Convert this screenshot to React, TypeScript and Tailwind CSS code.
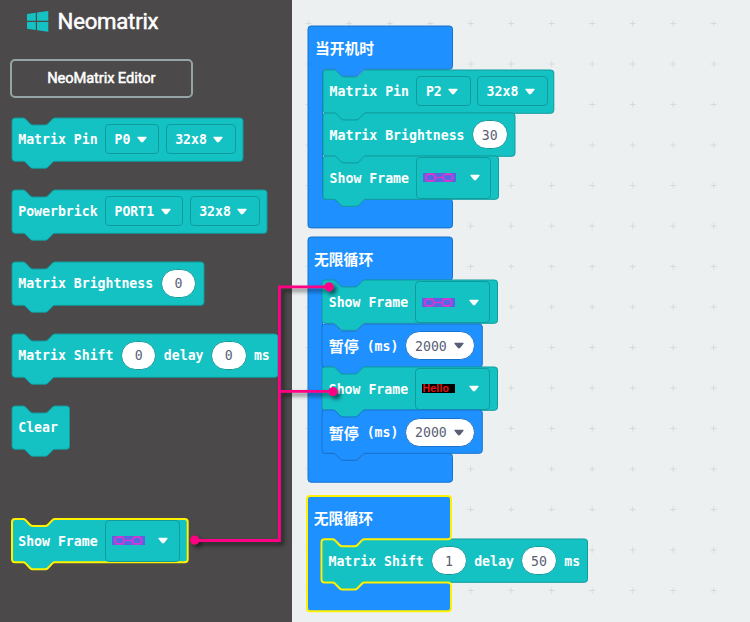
import React from "react";

const TEAL = "#14c2c4";
const TEAL_EDGE = "#109b9d";
const BLUE = "#1e90ff";
const BLUE_EDGE = "#1873cc";

const round = (n: number) => Math.round(n * 100) / 100;

// Outline of a statement block with the notch on top and the tab underneath.
function blockPath(w: number, h: number) {
  const r = 3;
  return `M0 ${r} Q0 0 ${r} 0 H11 Q12.5 0 13.6 1.1 L18 5.7 Q19.2 7 21 7 H33 Q34.8 7 36 5.7 L40.4 1.1 Q41.5 0 43 0 H${round(w - r)} Q${w} 0 ${w} ${r} V${round(h - r)} Q${w} ${h} ${round(w - r)} ${h} H43 Q41.5 ${h} 40.4 ${h + 1.1} L36 ${h + 5.7} Q34.8 ${h + 7} 33 ${h + 7} H21 Q19.2 ${h + 7} 18 ${h + 5.7} L13.6 ${h + 1.1} Q12.5 ${h} 11 ${h} H${r} Q0 ${h} 0 ${h - r} Z`;
}

// Outline of an event block that wraps a stack of statements.
function hatPath(w: number, inner: number) {
  const r = 3;
  const a = 43.3;
  const b = a + inner;
  const e = b + 28.7;
  const i = 14.5;
  return `M0 ${r} Q0 0 ${r} 0 H${w - r} Q${w} 0 ${w} ${r} V${a - r} Q${w} ${a} ${w - r} ${a} H${i + 43} Q${i + 41.5} ${a} ${i + 40.4} ${a + 1.1} L${i + 36} ${a + 5.7} Q${i + 34.8} ${a + 7} ${i + 33} ${a + 7} H${i + 21} Q${i + 19.2} ${a + 7} ${i + 18} ${a + 5.7} L${i + 13.6} ${a + 1.1} Q${i + 12.5} ${a} ${i + 11} ${a} H${i + 3} Q${i} ${a} ${i} ${a + 3} V${b - 3} Q${i} ${b} ${i + 3} ${b} H${i + 11} Q${i + 12.5} ${b} ${i + 13.6} ${b + 1.1} L${i + 18} ${b + 5.7} Q${i + 19.2} ${b + 7} ${i + 21} ${b + 7} H${i + 33} Q${i + 34.8} ${b + 7} ${i + 36} ${b + 5.7} L${i + 40.4} ${b + 1.1} Q${i + 41.5} ${b} ${i + 43} ${b} H${w - r} Q${w} ${b} ${w} ${b + r} V${e - r} Q${w} ${e} ${w - r} ${e} H${r} Q0 ${e} 0 ${e - r} Z`;
}

function Caret({ dark = false }: { dark?: boolean }) {
  return (
    <svg className="h-[7px] w-[10px] shrink-0 overflow-visible" viewBox="0 0 10 7">
      <path d="M1 1.3 H9 L5.8 5.3 Q5 6.1 4.2 5.3 Z" fill={dark ? "#575e75" : "#fff"} stroke={dark ? "#575e75" : "#fff"} strokeWidth="1.3" strokeLinejoin="round" />
    </svg>
  );
}

function Block({ width, blue, selected, children }: { width: number; blue?: boolean; selected?: boolean; children: React.ReactNode }) {
  return (
    <div className="relative h-[43.3px] shrink-0" style={{ width }}>
      <svg className="absolute left-0 top-0 h-full w-full overflow-visible">
        <path
          d={blockPath(width, 43.3)}
          fill={blue ? BLUE : TEAL}
          stroke={selected ? "#fff200" : blue ? BLUE_EDGE : TEAL_EDGE}
          strokeWidth={selected ? 2 : 1}
        />
      </svg>
      <div className="relative flex h-[43.3px] items-center gap-[7.4px] whitespace-pre pl-[6.7px]">{children}</div>
    </div>
  );
}

function Label({ text }: { text: string }) {
  return <span className="pt-[1.4px]">{text}</span>;
}

function Drop({ text, width }: { text: string; width: number }) {
  return (
    <div className="-mr-[1px] flex h-[30px] shrink-0 items-center gap-[6.5px] rounded-[4px] border border-[#109b9d] pl-[8.5px]" style={{ width }}>
      <Label text={text} />
      <Caret />
    </div>
  );
}

function Num({ text }: { text: string }) {
  return (
    <div className="flex h-[29px] w-[35.6px] shrink-0 items-center justify-center rounded-full border border-[#109b9d] bg-white font-normal text-[#575e75]">
      <Label text={text} />
    </div>
  );
}

function Frame({ hello }: { hello?: boolean }) {
  return (
    <div className="flex h-[42px] w-[75px] shrink-0 items-center gap-[13.5px] rounded-[4px] border border-[#109b9d] pl-[6px]">
      {hello ? (
        <div className="flex h-[9px] w-[33px] shrink-0 items-center bg-black font-['Liberation_Sans'] text-[10.5px] font-bold leading-[9px] tracking-[0.2px] text-[#f01010]">
          Hello
        </div>
      ) : (
        <svg className="h-[9px] w-[33px] shrink-0" viewBox="0 0 33 9">
          <rect width="33" height="9" fill="#5068e8" />
          <path d="M0 .5H33M0 8.5H33" stroke="#7058dc" strokeWidth="1" />
          <g fill="none" stroke="#df38c8" strokeWidth="1.7">
            <rect x="2.8" y="1.1" width="9.4" height="6.8" rx="3.4" />
            <rect x="20.3" y="1.1" width="9.4" height="6.8" rx="3.4" />
            <path d="M12 4.5H20.5" strokeWidth="1.3" />
          </g>
        </svg>
      )}
      <Caret />
    </div>
  );
}

function ShowFrame({ width, hello, selected }: { width: number; hello?: boolean; selected?: boolean }) {
  return (
    <Block width={width} selected={selected}>
      <Label text="Show Frame" />
      <Frame hello={hello} />
    </Block>
  );
}

function Pause() {
  return (
    <Block width={160.3} blue>
      <span className="flex items-center">
        <span className="font-['Noto_Sans_CJK_SC',sans-serif] text-[15px]">暂停</span>
        <Label text=" (ms)" />
      </span>
      <div className="-ml-[0.8px] flex h-[29px] w-[69.5px] shrink-0 items-center gap-[7px] rounded-full border border-[#1873cc] bg-white pl-[9px] font-normal text-[#575e75]">
        <Label text="2000" />
        <Caret dark />
      </div>
    </Block>
  );
}

function Hat({ title, x, y, inner, selected, children }: { title: string; x: number; y: number; inner: number; selected?: boolean; children: React.ReactNode }) {
  return (
    <div className="absolute" style={{ left: x, top: y }}>
      <svg className={selected ? "absolute left-0 top-0 z-10 h-px w-px overflow-visible" : "absolute left-0 top-0 h-px w-px overflow-visible"}>
        <path d={hatPath(selected ? 144 : 144.5, inner)} fill={BLUE} stroke={selected ? "#fff200" : BLUE_EDGE} strokeWidth={selected ? 2 : 1} />
      </svg>
      <div className="relative z-20 flex h-[43.3px] items-center pl-[6.5px] pt-[1.5px] font-['Noto_Sans_CJK_SC',sans-serif] text-[14.8px]">{title}</div>
      <div className="relative flex flex-col pl-[14.5px]">{children}</div>
    </div>
  );
}

function Connectors() {
  return (
    <svg className="pointer-events-none absolute left-0 top-0 z-30 h-[622px] w-[750px]">
      <defs>
        <filter id="soft" x="-10%" y="-10%" width="125%" height="125%">
          <feDropShadow dx="3" dy="3" stdDeviation="2" floodColor="#000" floodOpacity="0.6" />
        </filter>
      </defs>
      <g filter="url(#soft)" fill="none" stroke="#ff0084" strokeWidth="2.8">
        <path d="M195 540.5H279.4V286.8H329M279.4 391.3H333" />
        <g fill="#ff0084" stroke="none">
          <circle cx="194.7" cy="540" r="4.6" />
          <circle cx="329" cy="286.8" r="4.6" />
          <circle cx="333" cy="391.5" r="4.6" />
        </g>
      </g>
    </svg>
  );
}

export default function App() {
  return (
    <div className="relative flex h-[622px] w-[750px] overflow-hidden font-['DejaVu_Sans_Mono',monospace] text-[13.2px] font-bold leading-none text-white">
      <aside className="flex w-[292px] shrink-0 flex-col bg-[#4b4949]">
        <div className="flex h-[42px] items-center gap-[8.6px] pl-[27px] font-['Roboto',sans-serif] text-[22.2px] font-normal tracking-[-0.25px] [-webkit-text-stroke:0.5px_white]">
          <svg className="h-[21px] w-[22px]" viewBox="0 0 22 21">
            <path d="M0 3 L8.8 1.8 V9.8 H0Z M10 1.6 L21.3 0 V9.8 H10Z M0 11 H8.8 V19 L0 17.8Z M10 11 H21.3 V20.7 L10 19.2Z" fill={TEAL} />
          </svg>
          <span>Neomatrix</span>
        </div>
        <button className="ml-[10px] mt-[16.6px] flex h-[39px] w-[182.5px] items-center justify-center rounded-[5px] border-2 border-[#95a5a6] pt-px font-['Roboto',sans-serif] text-[14.7px] font-normal tracking-[-0.1px] [-webkit-text-stroke:0.5px_white]">
          NeoMatrix Editor
        </button>
        <div className="mt-[20.1px] flex flex-col gap-[28.7px] pl-[11.5px]">
          <Block width={231}>
            <Label text="Matrix Pin" />
            <Drop text="P0" width={54.3} />
            <Drop text="32x8" width={70.5} />
          </Block>
          <Block width={255}>
            <Label text="Powerbrick" />
            <Drop text="PORT1" width={78.3} />
            <Drop text="32x8" width={70.5} />
          </Block>
          <Block width={192}>
            <Label text="Matrix Brightness" />
            <Num text="0" />
          </Block>
          <Block width={266}>
            <Label text="Matrix Shift" />
            <Num text="0" />
            <Label text="delay" />
            <Num text="0" />
            <Label text="ms" />
          </Block>
          <Block width={57.5}>
            <Label text="Clear" />
          </Block>
        </div>
        <div className="mt-[70px] pl-[11.5px]">
          <ShowFrame width={175.7} selected />
        </div>
      </aside>
      <main className="relative flex-1 bg-[#ecf0f1]">
        <svg className="absolute left-0 top-0 h-full w-full">
          <defs>
            <pattern id="grid" x="-3.55" y="3.25" width="40.5" height="40.5" patternUnits="userSpaceOnUse">
              <path d="M17.2 20.25H23.3M20.25 17.2V23.3" stroke="#d3d8d9" strokeWidth="0.9" />
            </pattern>
          </defs>
          <rect width="100%" height="100%" fill="url(#grid)" />
        </svg>
        <Hat title="当开机时" x={16.4} y={26.3} inner={129.9}>
          <Block width={230.8}>
            <Label text="Matrix Pin" />
            <Drop text="P2" width={54.3} />
            <Drop text="32x8" width={70.5} />
          </Block>
          <Block width={192}>
            <Label text="Matrix Brightness" />
            <Num text="30" />
          </Block>
          <ShowFrame width={175.5} />
        </Hat>
        <Hat title="无限循环" x={15.5} y={237.2} inner={173.2}>
          <ShowFrame width={175.5} />
          <Pause />
          <ShowFrame width={175.5} hello />
          <Pause />
        </Hat>
        <Hat title="无限循环" x={15.3} y={496} inner={43.3} selected>
          <Block width={265.5}>
            <Label text="Matrix Shift" />
            <Num text="1" />
            <Label text="delay" />
            <Num text="50" />
            <Label text="ms" />
          </Block>
        </Hat>
      </main>
      <Connectors />
    </div>
  );
}
